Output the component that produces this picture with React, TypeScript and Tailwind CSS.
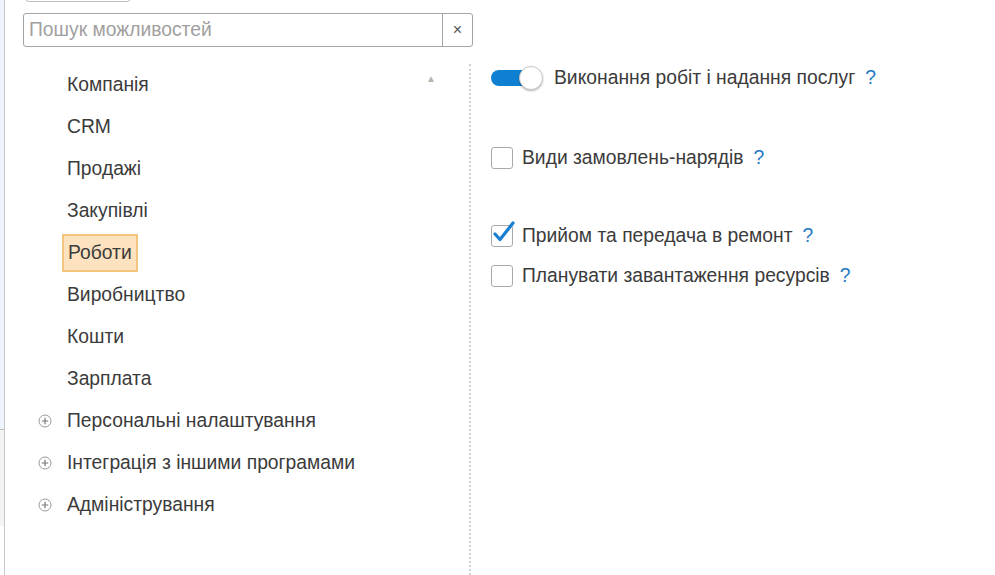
import React from "react";

const treeItems = [
  { text: "Компанія" },
  { text: "CRM" },
  { text: "Продажі" },
  { text: "Закупівлі" },
  { text: "Роботи", selected: true },
  { text: "Виробництво" },
  { text: "Кошти" },
  { text: "Зарплата" },
  { text: "Персональні налаштування", expandable: true },
  { text: "Інтеграція з іншими програмами", expandable: true },
  { text: "Адміністрування", expandable: true },
];

const PlusIcon = () => (
  <svg width="14" height="14" viewBox="0 0 14 14" className="shrink-0">
    <circle cx="7" cy="7" r="6" fill="white" stroke="#9a9a9a" strokeWidth="1" />
    <path d="M3.8 7h6.4M7 3.8v6.4" stroke="#777" strokeWidth="1.2" />
  </svg>
);

const Help = () => <span className="ml-[10px] text-[#1f7ac4]">?</span>;

const Checkbox = ({ checked }: { checked?: boolean }) => (
  <span className="relative w-[22px] h-[22px] shrink-0 rounded-[3px] border border-[#a9a9a9] bg-white">
    {checked && (
      <svg width="26" height="26" viewBox="0 0 26 26" className="absolute -left-px -top-[6px]">
        <path d="M4 14l5 5.5L22 3" fill="none" stroke="#1a7fd0" strokeWidth="3.2" strokeLinecap="round" strokeLinejoin="round" />
      </svg>
    )}
  </span>
);

export default function App() {
  return (
    <div className="w-[995px] h-[575px] bg-white flex overflow-hidden text-[#3b3b3b] text-[19.3px]" style={{ fontFamily: '"Liberation Sans", Arial, sans-serif' }}>
      {/* left strip */}
      <div className="w-[5px] flex flex-col border-r border-[#c8c8c8]">
        <div className="h-[430px] bg-[#eef4fb] border-b border-[#bdbdbd]" />
        <div className="h-[96px] bg-[#f3f3f3]" />
      </div>

      <div className="flex-1 flex flex-col relative">
        <div className="absolute left-[20px] -top-[8px] w-[106px] h-[10px] rounded-[4px] border border-[#bbbbbb]" />

        {/* search */}
        <div className="mt-[13px] ml-[18px] w-[450px] h-[34px] flex rounded-[3px] border border-[#a5a5a5]">
          <div className="flex-1 flex items-center pl-[5px] text-[#a0a0a0]">Пошук можливостей</div>
          <div className="w-[30px] flex items-center justify-center border-l border-[#a5a5a5] text-[#555] text-[16px]">×</div>
        </div>

        <div className="flex flex-1 mt-[17px]">
          {/* tree */}
          <div className="w-[464px] relative pl-[33px]">
            <span className="absolute left-[421px] top-[7px] text-[#b5b5b5] text-[10px]">▲</span>
            {treeItems.map((item) => (
              <div key={item.text} className="h-[42px] flex items-center">
                <span className="w-[29px] flex items-center">{item.expandable && <PlusIcon />}</span>
                {item.selected ? (
                  <span className="-ml-[5px] px-[4px] h-[38px] flex items-center bg-[#fde2bf] border-2 border-[#f4c37c]">{item.text}</span>
                ) : (
                  <span>{item.text}</span>
                )}
              </div>
            ))}
          </div>

          {/* divider */}
          <div className="w-0 border-l-2 border-dotted border-[#cfcfcf]" />

          {/* options */}
          <div className="flex-1 pl-[20px]">
            <div className="h-[28px] flex items-center">
              <span className="relative w-[52px] h-[24px] shrink-0">
                <span className="absolute left-0 top-[4px] w-[44px] h-[16px] rounded-full bg-[#0f7fd1]" />
                <span className="absolute right-0 top-0 w-[24px] h-[24px] rounded-full bg-white border border-[#c9c9c9] shadow-[0_1px_2px_rgba(0,0,0,0.3)]" />
              </span>
              <span className="ml-[11px]">Виконання робіт і надання послуг</span>
              <Help />
            </div>

            <div className="mt-[52px] h-[28px] flex items-center">
              <Checkbox />
              <span className="ml-[9px]">Види замовлень-нарядів</span>
              <Help />
            </div>

            <div className="mt-[50px] h-[28px] flex items-center">
              <Checkbox checked />
              <span className="ml-[9px]">Прийом та передача в ремонт</span>
              <Help />
            </div>

            <div className="mt-[12px] h-[28px] flex items-center">
              <Checkbox />
              <span className="ml-[9px]">Планувати завантаження ресурсів</span>
              <Help />
            </div>
          </div>
        </div>
      </div>
    </div>
  );
}
